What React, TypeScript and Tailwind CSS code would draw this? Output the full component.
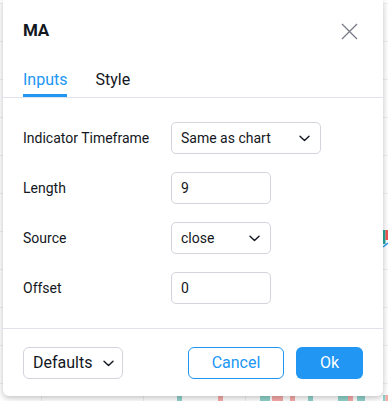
import React from "react";

const font = { fontFamily: "Roboto, 'Noto Sans', sans-serif" };

function Chevron() {
  return (
    <svg width="11" height="7" viewBox="0 0 11 7" fill="none">
      <path d="M1 1.2 L5.5 5.5 L10 1.2" stroke="#131722" strokeWidth="1.4" strokeLinecap="round" strokeLinejoin="round" />
    </svg>
  );
}

function ChartBg() {
  const hs = [3, 41, 79, 117, 155, 193, 231, 269, 307, 345, 383];
  const vs = [41, 143, 245, 347];
  const teal = [
    [177, 5], [260, 10], [308, 5], [338, 10], [357, 8], [383, 2.5],
  ];
  const red = [
    [218, 5], [272, 11], [290, 5], [348, 5], [385.5, 2.5],
  ];
  return (
    <svg className="absolute inset-0" width="388" height="401" viewBox="0 0 388 401">
      <rect width="388" height="401" fill="#ffffff" />
      {hs.map((y) => (
        <line key={"h" + y} x1="0" x2="388" y1={y + 0.5} y2={y + 0.5} stroke="#eceef2" />
      ))}
      {vs.map((x) => (
        <line key={"v" + x} y1="0" y2="401" x1={x + 0.5} x2={x + 0.5} stroke="#eceef2" />
      ))}
      {teal.map(([x, w]) => (
        <rect key={"t" + x} x={x} y="395" width={w} height="6" fill="#8fd3cb" />
      ))}
      {red.map(([x, w]) => (
        <rect key={"r" + x} x={x} y="395" width={w} height="6" fill="#f7aaa8" />
      ))}
      <rect x="383" y="230" width="2.5" height="14" fill="#26a69a" />
      <rect x="385.5" y="230" width="2.5" height="10" fill="#ef5350" />
      <line x1="383" y1="247" x2="388" y2="243" stroke="#2196f3" strokeWidth="1.5" />
    </svg>
  );
}

function Select({ value, width }: { value: string; width: string }) {
  return (
    <div className={`${width} h-8 flex items-center justify-between pl-[9px] pr-[10px] border border-[#d1d4dc] rounded-[5px] text-[14px] text-[#131722]`}>
      <span>{value}</span>
      <Chevron />
    </div>
  );
}

function Input({ value }: { value: string }) {
  return (
    <div className="w-[100px] h-8 flex items-center pl-[9px] border border-[#d1d4dc] rounded-[5px] text-[14px] text-[#131722]">
      {value}
    </div>
  );
}

export default function App() {
  return (
    <div className="relative w-[388px] h-[401px] overflow-hidden" style={font}>
      <ChartBg />
      <div className="absolute left-[3px] top-0 w-[380px] h-[396px] bg-white rounded-b-[6px] shadow-[0_2px_6px_rgba(0,0,0,0.25)] flex flex-col text-[#131722]">
        <div className="h-[62px] flex items-center justify-between pl-5 pr-[25px]">
          <span className="text-[17px] font-bold tracking-[-0.3px]">MA</span>
          <svg width="17" height="17" viewBox="0 0 17 17" fill="none">
            <path d="M1 1 L16 16 M16 1 L1 16" stroke="#787b86" strokeWidth="1.3" />
          </svg>
        </div>
        <div className="h-[36px] flex items-stretch gap-[28px] px-5 border-b border-[#e0e3eb]">
          <div className="flex items-center text-[16px] text-[#2196f3] border-b-[3px] border-[#2196f3] pt-[3px]">Inputs</div>
          <div className="flex items-center text-[16px] text-[#131722] pb-0">Style</div>
        </div>
        <div className="grid grid-cols-[148px_auto] gap-y-[18px] items-center pl-5 pt-[24px] pb-[24px] border-b border-[#e0e3eb] text-[14px]">
          <span>Indicator Timeframe</span>
          <Select value="Same as chart" width="w-[150px]" />
          <span>Length</span>
          <Input value="9" />
          <span>Source</span>
          <Select value="close" width="w-[100px]" />
          <span>Offset</span>
          <Input value="0" />
        </div>
        <div className="flex items-center justify-between px-5 pt-[18px]">
          <div className="w-[100px] h-8 flex items-center justify-between pl-[9px] pr-[8px] border border-[#d1d4dc] rounded-[6px] text-[16px]">
            <span>Defaults</span>
            <Chevron />
          </div>
          <div className="flex gap-3">
            <button className="w-[96px] h-8 border border-[#2196f3] rounded-[6px] text-[16px] text-[#2196f3] flex items-center justify-center">
              Cancel
            </button>
            <button className="w-[67px] h-8 bg-[#2196f3] rounded-[6px] text-[16px] text-white flex items-center justify-center">
              Ok
            </button>
          </div>
        </div>
      </div>
    </div>
  );
}
